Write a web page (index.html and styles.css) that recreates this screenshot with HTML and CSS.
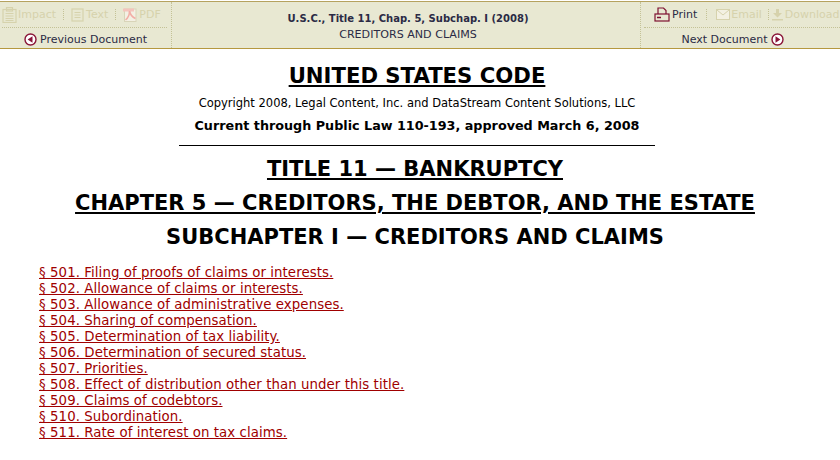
FILE: index.html
```html
<!DOCTYPE html>
<html lang="en">
<head>
    <meta charset="UTF-8">
    <title>United States Code</title>
    <link rel="stylesheet" href="styles.css">
</head>
<body>
    <div class="toolbar">
        <div class="side side-left">
            <div class="tools">
                <span class="tool off">
                    <svg width="15" height="16" viewBox="0 0 15 16" fill="none" stroke="#d6d2ac" stroke-width="1.2"><rect x="1" y="2.500" width="13" height="13"/><rect x="4.500" y="0.600" width="6" height="3.400"/><path d="M3.500 6.500h8M3.500 9h8M3.500 11.500h8M3.500 13.500h8"/></svg>
                    Impact
                </span>
                <span class="sep"></span>
                <span class="tool tool-wide off">
                    <svg width="13" height="14" viewBox="0 0 13 14" fill="none" stroke="#d6d2ac" stroke-width="1.200"><rect x="1" y="1" width="11" height="12"/><path d="M3.500 4.500h6M3.500 7h6M3.500 9.500h6"/></svg>
                    Text
                </span>
                <span class="sep"></span>
                <span class="tool tool-wide off">
                    <svg width="14" height="14" viewBox="0 0 14 14"><rect x="1.500" y="1" width="11.500" height="12.500" fill="#f3f0e4" stroke="#d8d4b8"/><rect x="0" y="0.500" width="11" height="3" fill="#f4c4bc"/><path d="M6.500 3c.8 4 2.500 6 6 7.500M6.500 3c0 4-1.500 7-4 9" fill="none" stroke="#f2aea6" stroke-width="1.600"/></svg>
                    PDF
                </span>
            </div>
            <a class="nav" href="#">
                <svg class="arrow" width="13" height="13" viewBox="0 0 13 13"><circle cx="6.500" cy="6.500" r="5.500" fill="#fff" stroke="#8a1538" stroke-width="1.400"/><path d="M8.500 3.300v6.400L3.600 6.500z" fill="#8a1538"/></svg>
                Previous Document
            </a>
        </div>
        <div class="middle">
            <div class="cite">U.S.C., Title 11, Chap. 5, Subchap. I (2008)</div>
            <div class="cite-sub">CREDITORS AND CLAIMS</div>
        </div>
        <div class="side side-right">
            <div class="tools">
                <span class="tool tool-wide">
                    <svg width="16" height="15" viewBox="0 0 16 15" fill="none" stroke="#7d0f30" stroke-width="1.200"><path d="M4 7V1h5.500L12 3.500V7"/><rect x="1" y="7" width="14" height="7"/><path d="M3 10.500h4" stroke-width="1.500"/></svg>
                    Print
                </span>
                <span class="sep"></span>
                <span class="tool off">
                    <svg width="14" height="11" viewBox="0 0 14 11" fill="#f3f1e2" stroke="#d6d2ac"><rect x="0.500" y="0.500" width="13" height="10"/><path d="M1 1l6 5 6-5" fill="none"/></svg>
                    Email
                </span>
                <span class="sep sep-tight"></span>
                <span class="tool tool-wide off">
                    <svg width="11" height="12" viewBox="0 0 11 12" fill="#d6d2ac"><path d="M4 0h3v4h3L5.500 8.500 1 4h3zM0 10h11v1.500H0z"/></svg>
                    Download
                </span>
            </div>
            <a class="nav nav-next" href="#">
                Next Document
                <svg class="arrow" width="13" height="13" viewBox="0 0 13 13"><circle cx="6.500" cy="6.500" r="5.500" fill="#fff" stroke="#8a1538" stroke-width="1.400"/><path d="M4.500 3.300v6.400l4.900-3.200z" fill="#8a1538"/></svg>
            </a>
        </div>
    </div>

    <div class="document">
        <h1 class="code-title">UNITED STATES CODE</h1>
        <p class="copyright">Copyright 2008, Legal Content, Inc. and DataStream Content Solutions, LLC</p>
        <p class="current">Current through Public Law 110-193, approved March 6, 2008</p>
        <hr class="rule">
        <h2 class="heading heading-first under">TITLE 11 — BANKRUPTCY</h2>
        <h2 class="heading under">CHAPTER 5 — CREDITORS, THE DEBTOR, AND THE ESTATE</h2>
        <h2 class="heading">SUBCHAPTER I — CREDITORS AND CLAIMS</h2>

        <ul class="sections">
            <li><a href="#">§ 501. Filing of proofs of claims or interests.</a></li>
            <li><a href="#">§ 502. Allowance of claims or interests.</a></li>
            <li><a href="#">§ 503. Allowance of administrative expenses.</a></li>
            <li><a href="#">§ 504. Sharing of compensation.</a></li>
            <li><a href="#">§ 505. Determination of tax liability.</a></li>
            <li><a href="#">§ 506. Determination of secured status.</a></li>
            <li><a href="#">§ 507. Priorities.</a></li>
            <li><a href="#">§ 508. Effect of distribution other than under this title.</a></li>
            <li><a href="#">§ 509. Claims of codebtors.</a></li>
            <li><a href="#">§ 510. Subordination.</a></li>
            <li><a href="#">§ 511. Rate of interest on tax claims.</a></li>
        </ul>
    </div>
</body>
</html>
```

FILE: styles.css
```css
body {
    margin: 0;
    background: white;
    font-family: "DejaVu Sans", Verdana, sans-serif;
    color: black;
    overflow: hidden;
}
.toolbar {
    display: flex;
    height: 46px;
    margin-top: 1px;
    background: #e8e8d2;
    border-top: 1px solid #b5a25f;
    border-bottom: 1px solid #b5983f;
    color: #2b2b45;
}
.side {
    display: flex;
    flex-direction: column;
    flex: none;
}
.side-left {
    width: 171px;
    border-right: 1px dotted #c4c296;
}
.side-right {
    width: 199px;
    border-left: 1px dotted #c4c296;
}
.tools {
    display: flex;
    align-items: center;
    gap: 7px;
    height: 25px;
    margin: 0 4px 0 2px;
    border-bottom: 1px dotted #c4c296;
    font-size: 11px;
    white-space: nowrap;
}
.side-right .tools {
    gap: 9px;
    padding-left: 10px;
    margin-right: 0;
    margin-left: 3px;
}
.tool {
    display: flex;
    align-items: center;
    gap: 1px;
}
.tool-wide {
    gap: 2px;
}
.off {
    color: #d6d2ac;
}
.sep {
    height: 11px;
    border-left: 1px dotted #c4c296;
}
.sep-tight {
    margin: 0 -6px 0 -3px;
}
.nav {
    display: flex;
    align-items: center;
    justify-content: center;
    gap: 3px;
    flex: 1;
    padding-top: 3px;
    font-size: 11px;
    color: #2b2b45;
    text-decoration: none;
}
.nav-next {
    padding-right: 16px;
}
.middle {
    flex: 1;
    text-align: center;
    padding: 9px 0 0 4px;
}
.cite {
    font-size: 10px;
    font-weight: bold;
    line-height: 16px;
}
.cite-sub {
    font-size: 11.100px;
    line-height: 15px;
}
.document {
    text-align: center;
    padding: 14px 6px 0 0;
}
.code-title {
    margin: 0;
    font-size: 21.200px;
    line-height: 26px;
    text-decoration: underline;
}
.copyright {
    margin: 7px 0 0;
    font-size: 11.500px;
    line-height: 15px;
}
.current {
    margin: 7px 0 0;
    font-size: 12.750px;
    line-height: 16px;
    font-weight: bold;
}
.rule {
    width: 476px;
    margin: 11px auto 0;
    border: none;
    border-top: 1px solid black;
}
.heading {
    margin: 0 4px 0 0;
    padding-top: 8px;
    font-size: 21px;
    line-height: 26px;
}
.heading-first {
    padding-top: 10px;
}
.under {
    text-decoration: underline;
}
.sections {
    list-style: none;
    margin: 15px 0 0;
    padding: 0 0 0 39px;
    text-align: left;
    font-size: 13.330px;
    letter-spacing: 0.070px;
    line-height: 16px;
}
.sections a {
    color: #a00000;
}
```
